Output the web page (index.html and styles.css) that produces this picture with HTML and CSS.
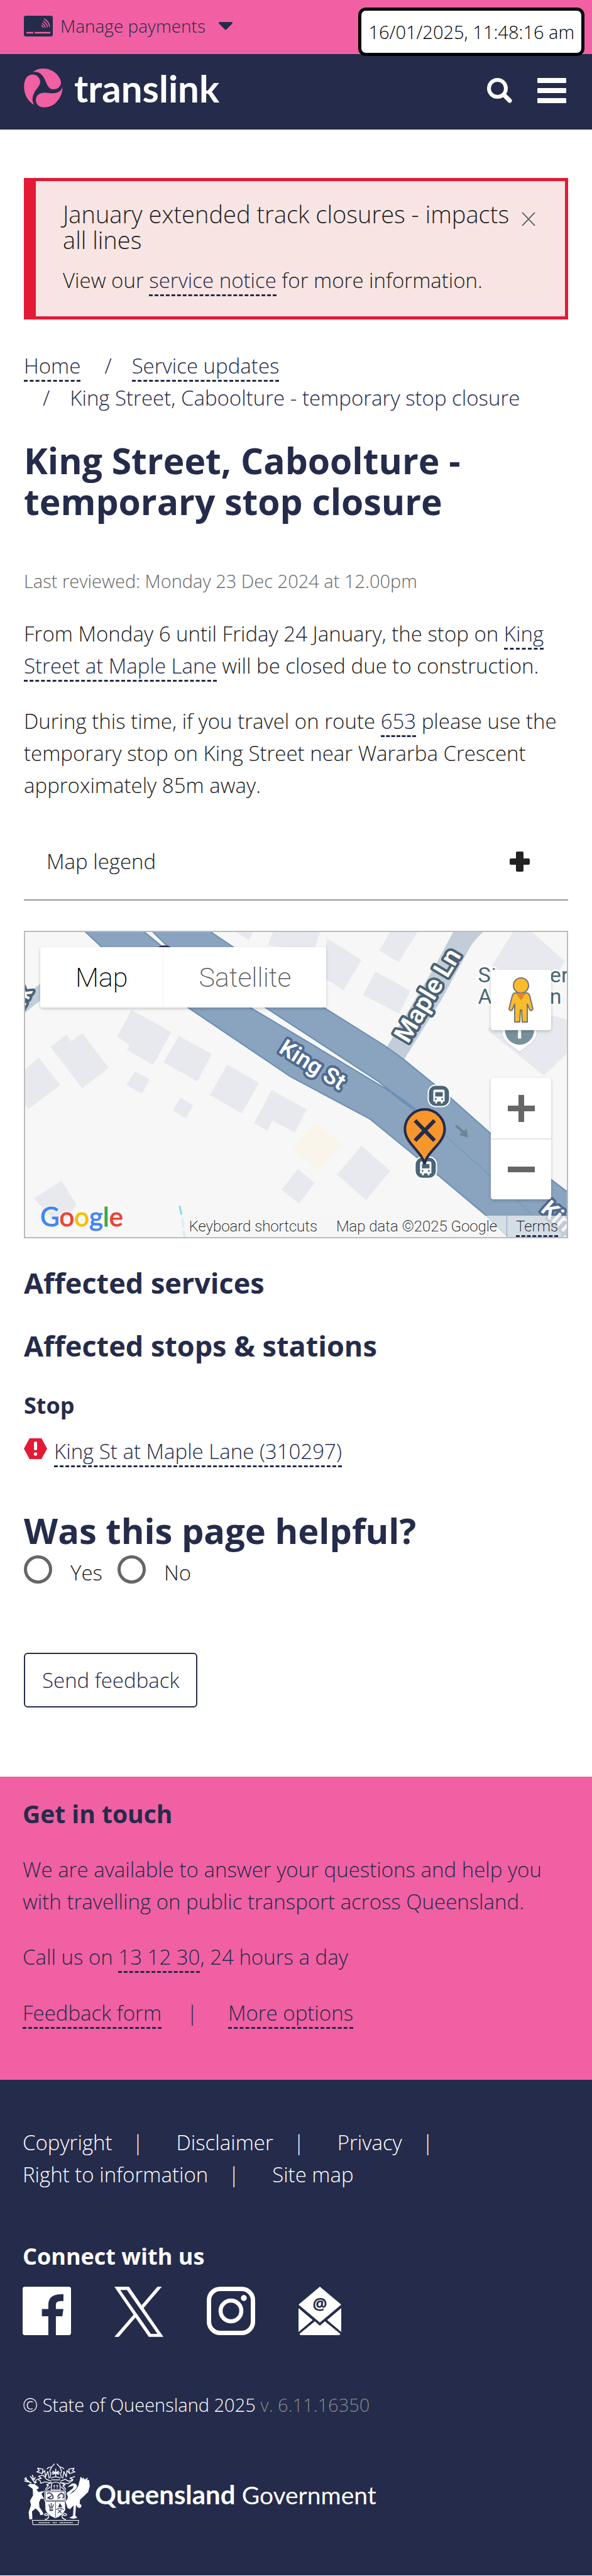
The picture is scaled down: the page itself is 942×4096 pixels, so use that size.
FILE: index.html
```html
<!DOCTYPE html>
<html lang="en">
<head>
<meta charset="utf-8">
<meta name="viewport" content="width=device-width, initial-scale=1">
<title>King Street, Caboolture - temporary stop closure | Translink</title>
<link rel="stylesheet" href="styles.css">
</head>
<body>
<header>
  <div class="topbar">
    <button class="payments" type="button">
      <svg width="46" height="33" viewBox="0 0 46 33" aria-hidden="true">
        <rect width="46" height="33" rx="3" fill="#252b4b"/>
        <g fill="none" stroke="#f060a2" stroke-width="1.6">
          <path d="M32 5Q40 9 41 18"/><path d="M31 9Q37 12 37.5 18.500"/><path d="M29 12Q33 14 34 19"/><path d="M28 15Q30 16 31 19"/>
          <path d="M4 27H15M17 27H42" stroke-width="2.500"/>
        </g>
      </svg>
      <span>Manage payments</span>
      <svg class="caret" width="22" height="13" viewBox="0 0 22 13" aria-hidden="true"><path d="M1 0H21Q23 1 21 3L12 12Q11 13 10 12L1 3Q-1 1 1 0Z" fill="#252b4b"/></svg>
    </button>
    <time class="stamp" datetime="2025-01-16T11:48:16">16/01/2025, 11:48:16 am</time>
  </div>
  <nav class="navbar" aria-label="Main">
    <a class="brand" href="#">
      <svg width="62" height="62" viewBox="36 20 232 234" aria-hidden="true">
        <g fill="#f060a2">
          <path d="M90 40C120 15 170 15 205 33C240 52 258 85 258 105C258 125 240 145 212 145C185 145 175 120 163 90C150 60 130 35 90 40Z"/>
          <path d="M98 238C60 220 36 175 36 130C36 85 55 56 88 56C115 56 133 78 133 100C133 125 108 140 95 170C83 195 85 220 98 238Z"/>
          <path d="M267 131C268 180 240 215 215 235C190 252 160 254 145 252C120 248 107 230 107 208C107 185 125 165 155 165C190 163 245 185 267 131Z"/>
        </g>
      </svg>
      <span>translink</span>
    </a>
    <div class="tools">
      <button type="button" aria-label="Search">
        <svg width="40" height="40" viewBox="0 0 40 40"><g fill="none" stroke="#fff"><circle cx="16.5" cy="16.5" r="13.500" stroke-width="6"/><path d="M26.500 26.500L36 36" stroke-width="7" stroke-linecap="round"/></g></svg>
      </button>
      <button type="button" aria-label="Menu">
        <svg width="46" height="40" viewBox="0 0 46 40"><g fill="#fff"><rect width="46" height="8" rx="1"/><rect y="16" width="46" height="8" rx="1"/><rect y="32" width="46" height="8" rx="1"/></g></svg>
      </button>
    </div>
  </nav>
</header>

<main>
  <section class="alert" role="alert">
    <div class="alert-body">
      <h2>January extended track closures - impacts all lines</h2>
      <p>View our <a href="#">service notice</a> for more information.</p>
    </div>
    <button class="close" type="button" aria-label="Close">
      <svg width="24" height="26" viewBox="0 0 24 26"><path d="M2 4L22 25M22 4L2 25" stroke="#fff" stroke-width="2"/><path d="M2 2L22 23M22 2L2 23" stroke="#666" stroke-width="2"/></svg>
    </button>
  </section>

  <ol class="crumbs" aria-label="Breadcrumb">
    <li><a href="#">Home</a></li>
    <li><a href="#">Service updates</a></li>
    <li>King Street, Caboolture - temporary stop closure</li>
  </ol>

  <h1>King Street, Caboolture - temporary stop closure</h1>
  <p class="reviewed">Last reviewed: Monday 23 Dec 2024 at 12.00pm</p>
  <p class="para">From Monday 6 until Friday 24 January, the stop on <a href="#">King Street at Maple Lane</a> will be closed due to construction.</p>
  <p class="para">During this time, if you travel on route <a href="#">653</a> please use the temporary stop on King Street near Wararba Crescent approximately 85m away.</p>

  <button class="legend" type="button" aria-expanded="false">
    <span>Map legend</span>
    <svg width="32" height="32" viewBox="0 0 32 32" aria-hidden="true"><path d="M12 0H20Q22 0 22 2V11H30Q32 11 32 13V19Q32 21 30 21H22V30Q22 32 20 32H12Q10 32 10 30V21H2Q0 21 0 19V13Q0 11 2 11H10V2Q10 0 12 0Z" fill="#222"/></svg>
  </button>

  <section class="map" aria-label="Map">
    <svg class="map-art" viewBox="2 2 862 484" preserveAspectRatio="xMidYMid slice">
      <rect width="866" height="488" fill="#f7f7f7"/>
      <g transform="scale(.6008 .3363) translate(-64 -57)">
        <g fill="#e8e9ee">
          <path d="M350 430L455 535L407 690L338 620L345 598L312 556Z"/>
          <path d="M475 553L562 638L524 767L435 678Z"/>
          <path d="M220 541L290 704L220 800L136 606L178 547L190 578Z"/>
          <path d="M105 655L162 785L78 897L64 870V720Z"/>
          <path d="M358 720L398 758L378 826L337 785Z"/>
          <path d="M603 688L687 775L641 918L557 832Z"/>
          <path d="M479 844L513 880L494 942L459 905Z"/>
          <path d="M720 808L813 900L782 1008L722 953L709 1000L674 966Z"/>
          <path d="M958 1072L1034 1190L970 1327L893 1207Z"/>
          <path d="M790 1180L834 1247L793 1344L746 1278Z"/>
          <path d="M165 1236L205 1350L160 1450L92 1320Z"/>
          <path d="M995 250L1087 340L1057 448L962 360Z"/>
          <path d="M867 93L958 195L910 336L850 270Z"/>
          <path d="M725 57H850L832 150L710 125Z"/>
          <path d="M1035 57H1108L1056 205L1005 150Z"/>
          <path d="M620 57H673L660 100Z"/>
          <path d="M1360 57H1405L1495 200L1450 340L1300 230Z"/>
          <path d="M1350 400L1510 480V620L1440 740L1290 525Z"/>
        </g>
        <path d="M835 960L905 1060L848 1192L777 1090Z" fill="#f9f5ea"/>
        <path d="M64 370L120 290V370L64 450Z" fill="#c2cdd9"/>
        <path d="M1202 57H1283Q1250 110 1240 150L1170 380L1070 665L1020 620L1150 230Z" fill="#c2cdd9"/>
        <path d="M225 57L290 165L500 420L770 745L980 945L1100 1120L1290 1405L1350 1510H1510V1300L1300 1015L1190 840L1070 665L1020 600L850 410L620 135L555 57Z" fill="#8aa3bf" stroke="#6b8fb4" stroke-width="2" vector-effect="non-scaling-stroke"/>
        <path d="M380 57H403L445 130L705 420L1000 765L1040 822L955 730L665 420L430 130Z" fill="#f7f7f7" stroke="#6b8fb4" stroke-width="2" vector-effect="non-scaling-stroke"/>
        <path d="M1038 820Q1110 890 1190 1040L1370 1330L1470 1510" fill="none" stroke="#6b8fb4" vector-effect="non-scaling-stroke"/>
        <path d="M1038 820L1100 905" stroke="#6b8fb4" stroke-width="4" vector-effect="non-scaling-stroke"/>
        <ellipse cx="437" cy="148" rx="22" ry="22" fill="#252b4b"/>
        <path d="M477 1355Q488 1440 490 1510" fill="none" stroke="#8fd8e8" stroke-width="3" stroke-dasharray="14 6" vector-effect="non-scaling-stroke"/>
      </g>
      <g class="road-name" stroke="#4f6a92">
        <text x="0" y="0" font-size="36" transform="translate(404 192) rotate(32)">King St</text>
        <text x="0" y="0" font-size="36" transform="translate(820 444) rotate(42)">King St</text>
      </g>
      <g class="road-name" stroke="#4b6274">
        <text x="0" y="0" font-size="40" transform="translate(611 180) rotate(-59)">Maple Ln</text>
        <text x="0" y="0" font-size="32" transform="translate(-6 136) rotate(-62)">ark</text>
      </g>
      <g class="poi-name"><text x="722" y="82">St</text><text x="836" y="82">er</text><text x="722" y="116">A</text><text x="836" y="116">n C</text></g>
      <path d="M760 160A28 28 0 0 1 816 160C816 178 796 184 788 193C780 184 760 178 760 160Z" fill="#fff" stroke="#ccd3dc"/>
      <circle cx="788" cy="158" r="23" fill="#78909c"/><path d="M788 150V171" stroke="#fff" stroke-width="5"/>
      <g stroke="#fff" stroke-width="2"><rect x="643" y="245" width="34" height="34" rx="12" fill="#4a6578"/><rect x="622" y="359" width="34" height="34" rx="12" fill="#4a6578"/></g>
      <g fill="#fff">
        <path d="M654 252H666Q669 252 669 255V271H666V274H663V271H657V274H654V271H651V255Q651 252 654 252Z"/>
        <path d="M633 366H645Q648 366 648 369V385H645V388H642V385H636V388H633V385H630V369Q630 366 633 366Z"/>
      </g>
      <g fill="#4a6578"><rect x="654" y="256" width="12" height="7"/><rect x="633" y="370" width="12" height="7"/><circle cx="655" cy="267" r="1.500"/><circle cx="665" cy="267" r="1.500"/><circle cx="634" cy="381" r="1.500"/><circle cx="644" cy="381" r="1.500"/></g>
      <path d="M637 370C633 350 606 337 606 315A31.500 31.500 0 0 1 669 315C669 337 641 350 637 370Z" fill="#f7962a" stroke="#252b4b" stroke-width="4"/>
      <path d="M622 301L653 333M653 301L622 333" stroke="#252b4b" stroke-width="6"/>
      <path d="M687 309L699 320" stroke="#6c8396" stroke-width="4"/><path d="M706 328L692 324L704 314Z" fill="#6c8396"/>
    </svg>

    <div class="map-types"><button type="button">Map</button><button type="button" class="off">Satellite</button></div>
    <div class="map-controls">
      <button class="pegman" type="button" aria-label="Street View">
        <svg width="40" height="72" viewBox="0 0 40 72"><g fill="#fbbc2c" stroke="#757575" stroke-width="2"><path d="M10 25H30Q33 26 34 30L39 50Q38 54 34 52L30 42V71H22L21 52H19L18 71H10V42L6 52Q2 54 1 50L6 30Q7 26 10 25Z"/><circle cx="20" cy="13" r="12"/></g><path d="M12 25H28L20 37Z" fill="#e0852f"/></svg>
      </button>
      <div class="zoom">
        <button type="button" aria-label="Zoom in"><svg width="43" height="43" viewBox="0 0 43 43"><path d="M17 0H26V17H43V26H26V43H17V26H0V17H17Z" fill="#666"/></svg></button>
        <button type="button" aria-label="Zoom out"><svg width="43" height="43" viewBox="0 0 43 43"><path d="M0 17H43V26H0Z" fill="#666"/></svg></button>
      </div>
    </div>
    <a class="google" href="#"><span class="b">G</span><span class="r">o</span><span class="y">o</span><span class="b">g</span><span class="g">l</span><span class="r">e</span></a>
    <div class="map-credits">
      <button type="button">Keyboard shortcuts</button><span>Map data ©2025 Google</span><span class="terms"><a href="#">Terms</a></span>
    </div>
  </section>

  <h2 class="section-title">Affected services</h2>
  <h2 class="section-title">Affected stops &amp; stations</h2>
  <h3>Stop</h3>
  <div class="stop">
    <svg width="37" height="33" viewBox="0 0 37 33" aria-hidden="true"><path d="M9 0H28L37 16.500L28 33H9L0 16.500Z" fill="#e41936"/><path d="M18.500 7.500V16.500" stroke="#fff" stroke-width="5" stroke-linecap="round"/><circle cx="18.500" cy="25" r="2.700" fill="#fff"/></svg>
    <p><a href="#">King St at Maple Lane (310297)</a></p>
  </div>

  <form class="helpful">
    <fieldset>
      <legend>Was this page helpful?</legend>
      <div class="choices">
        <input type="radio" name="helpful" id="yes"><label for="yes">Yes</label>
        <input type="radio" name="helpful" id="no"><label for="no">No</label>
      </div>
    </fieldset>
    <button class="send" type="button">Send feedback</button>
  </form>
</main>

<section class="contact">
  <h2>Get in touch</h2>
  <p>We are available to answer your questions and help you with travelling on public transport across Queensland.</p>
  <p>Call us on <a href="#">13 12 30</a>, 24 hours a day</p>
  <ul>
    <li><a href="#">Feedback form</a></li>
    <li><a href="#">More options</a></li>
  </ul>
</section>

<footer>
  <ul class="legal">
    <li><a href="#">Copyright</a></li>
    <li><a href="#">Disclaimer</a></li>
    <li><a href="#">Privacy</a></li>
    <li><a href="#">Right to information</a></li>
    <li><a href="#">Site map</a></li>
  </ul>
  <h2>Connect with us</h2>
  <div class="social">
    <a href="#" aria-label="Facebook"><svg width="77" height="77" viewBox="60 1056 128 288" preserveAspectRatio="none"><path fill="#fff" d="M66 1056H182Q188 1056 188 1070V1330Q188 1344 182 1344H148V1232H165L168 1189H148V1165C148 1145 153 1141 168 1141V1101C140 1098 128 1120 128 1165V1189H111V1232H128V1344H66Q60 1344 60 1330V1070Q60 1056 66 1056Z"/></svg></a>
    <a href="#" aria-label="X"><svg width="78" height="80" viewBox="0 0 1200 1227"><path fill="#fff" d="M714.163 519.284L1160.890 0H1055.030L667.137 450.887L357.328 0H0L468.492 681.821L0 1226.370H105.866L515.491 750.218L842.672 1226.370H1200L714.137 519.284ZM569.165 687.828L521.697 619.934L144.011 79.694H306.615L611.412 515.685L658.880 583.579L1055.080 1150.300H892.476L569.165 687.854Z"/></svg></a>
    <a href="#" aria-label="Instagram"><svg width="77" height="77" viewBox="0 0 77 77"><g fill="none" stroke="#fff"><rect x="3.500" y="3.500" width="70" height="70" rx="18" stroke-width="7"/><circle cx="38.500" cy="38.500" r="16.500" stroke-width="6.500"/></g><circle cx="59" cy="18" r="4.700" fill="#fff"/></svg></a>
    <a href="#" aria-label="Email"><svg width="68" height="77" viewBox="0 0 68 77"><path fill="#fff" d="M34 0L68 28.500L34 57L0 28.500ZM0 34L22.500 53L0 72ZM68 34L45.500 53L68 72ZM26 55L34 62L42 55L66.500 75L65 77H3L1.500 75Z"/><text class="at" x="34" y="37" text-anchor="middle">@</text></svg></a>
  </div>
  <p class="copy">© State of Queensland 2025 <span>v. 6.11.16350</span></p>
  <a class="gov" href="#">
    <svg width="105" height="98" viewBox="26 40 392 367" aria-hidden="true">
      <g fill="none" stroke="#fff" stroke-width="5" stroke-linejoin="round">
        <path d="M208 42L190 62L180 85L186 105L180 125M222 42L240 62L250 85L244 105L250 125"/>
        <path d="M190 62L172 64L162 74M240 62L254 64L264 74"/>
        <path d="M106 68L140 74L134 100L150 82L154 120L168 88L176 130M106 68L118 84L102 90L134 100M106 134L130 128L112 116L140 110L160 134L188 146M106 134L122 142L126 158L150 150L186 156"/>
        <path d="M326 68L292 74L298 100L282 82L278 120L264 88L256 130M326 68L314 84L330 90L298 100M330 118L300 128L318 136L292 146L272 134L244 146M318 140L290 160L250 156"/>
        <path d="M152 196L172 172L160 168L192 152M276 196L258 172L272 168L240 152M160 198L184 178M268 198L246 178"/>
        <path d="M28 130L46 142L70 158M36 122L44 142M28 144L52 150M64 116L76 134L92 158M76 108L82 134M94 122L84 140M102 134L92 152M102 152L90 158" stroke-width="6"/>
        <path d="M150 376Q180 366 172 348Q160 330 148 344Q150 356 172 346M276 376Q246 366 254 348Q266 330 280 344Q278 356 254 346"/>
        <path d="M75 379H352L348 405H80Z" stroke-width="4"/>
        <path d="M114 393H180M198 393H220M238 393H316" stroke-width="8" stroke-dasharray="5 4"/>
        <path d="M186 128Q215 112 244 128M188 138H242M190 160L188 198H242L240 160Q215 142 190 160Z"/>
        <path d="M206 166V192M224 166V192M199 174H213M217 174H231" stroke-width="3"/>
        <path d="M196 86L234 106M234 86L196 106M215 72V118M190 96H240" stroke-width="6"/>
      </g>
      <g fill="#fff">
        <path d="M48 170L62 162L90 164L114 182L112 192L100 194L112 210L148 204L130 222L146 252L126 250L116 272L118 300L138 330L142 344L124 348L118 330L96 308L74 326L76 372L58 372L54 330L68 288L62 262L80 230L78 192Z"/>
        <path d="M284 182L312 160Q338 154 342 176Q344 190 316 206L300 224Q340 200 350 172L364 118L374 132L380 122L386 136L406 124L402 140L414 138L418 176L408 210L380 238L360 256L358 280L370 290L362 306L346 302L336 286L332 350L344 364L320 370L296 364L318 352L322 290L300 312L286 306L274 270L288 242L280 216L318 188L322 172Z"/>
        <path d="M148 202H276V266H270L272 316Q256 350 214 366Q168 350 154 316L152 266H148Z"/>
      </g>
      <g fill="none" stroke="#252b4b" stroke-width="3">
        <path d="M154 208H270V260H154ZM214 266V360M158 266H268"/>
        <path d="M164 222Q176 210 190 222Q206 240 196 248Q176 256 168 240M226 240Q240 212 258 222Q270 236 256 248M226 250L244 240M166 248L190 232" stroke-width="6"/>
        <path d="M174 284L182 306M188 276V306M202 284L194 306M176 312H200M178 320H198" stroke-width="5"/>
        <path d="M228 314L250 336M250 314L228 336M218 316Q238 296 264 316" stroke-width="4"/>
      </g>
      <path d="M230 300L240 276L254 300Z" fill="#252b4b"/>
    </svg>
    <span class="gov-name"><strong>Queensland</strong> <span>Government</span></span>
  </a>
</footer>
</body>
</html>
```
FILE: styles.css
```css
:root {
  --navy: #252b4b;
  --pink: #f060a2;
}
* { box-sizing: border-box; margin: 0; padding: 0; }
body {
  background: #fff;
  color: #222;
  font: 300 33px/51px "Open Sans", "Noto Sans", sans-serif;
}
button { font: inherit; color: inherit; background: none; border: 0; cursor: pointer; }
svg { display: block; flex: none; }
ul, ol { list-style: none; }
a { color: var(--navy); text-decoration: none; border-bottom: 3px dashed var(--navy); }
h1, h2, h3, legend { color: var(--navy); font-weight: 700; }

/* Header */
.topbar {
  position: relative;
  display: flex;
  align-items: center;
  min-height: 86px;
  padding: 0 38px 4px;
  background: var(--pink);
}
.payments {
  display: flex;
  align-items: center;
  gap: 12px;
  color: var(--navy);
  font-size: 28px;
}
.caret { margin-left: 9px; }
.stamp {
  position: absolute;
  top: 12px;
  right: 12px;
  z-index: 1;
  padding: 12px 11px;
  border: 5px solid #000;
  border-radius: 12px;
  background: #fff;
  color: #000;
  font-size: 29px;
  line-height: 43px;
}
.navbar {
  display: flex;
  align-items: center;
  justify-content: space-between;
  min-height: 120px;
  padding: 0 41px 12px 38px;
  background: var(--navy);
}
.brand {
  display: flex;
  align-items: center;
  gap: 18px;
  border: 0;
  color: #fff;
  font: 700 60px/72px Lato, sans-serif;
}
.tools { display: flex; align-items: center; gap: 40px; padding-top: 8px; }

/* Main column */
main { padding: 77px 38px 110px; }
.alert {
  display: flex;
  justify-content: space-between;
  padding: 32px 46px 32px 43px;
  border: 5px solid #e41936;
  border-left-width: 19px;
  background: #f8e5e3;
}
.alert-body { flex: 1; }
.alert h2 { margin-bottom: 18px; color: #222; font-weight: 300; font-size: 38px; line-height: 41px; }
.close { align-self: flex-start; padding-top: 16px; }
.crumbs { display: flex; flex-wrap: wrap; column-gap: 8px; margin-top: 48px; color: var(--navy); }
.crumbs li + li { padding-left: 30px; }
.crumbs li + li::before { content: "/"; margin-right: 32px; }
h1 { margin-top: 42px; font-size: 57px; line-height: 65px; }
.reviewed { margin-top: 72px; color: #666; font-size: 29px; line-height: 43px; }
.para { margin-top: 37px; }
.legend {
  display: flex;
  align-items: center;
  justify-content: space-between;
  width: 100%;
  margin-top: 34px;
  padding: 36px 61px 35px 36px;
  border-bottom: 2px solid #979797;
}

/* Map */
.map {
  position: relative;
  height: 489px;
  margin-top: 48px;
  overflow: hidden;
  border: 2px solid #bbb;
}
.map-art { width: 100%; height: 100%; }
.road-name { fill: #fff; stroke-width: 8px; stroke-linejoin: round; paint-order: stroke; font-family: Roboto, sans-serif; font-weight: 600; }
.poi-name { fill: #4d6773; stroke: #fff; stroke-width: 5px; paint-order: stroke; font: 400 34px Roboto, sans-serif; }
.map-types {
  position: absolute;
  top: 24px;
  left: 24px;
  display: flex;
  gap: 1px;
  border-radius: 4px;
  background: #eee;
  box-shadow: 0 2px 5px rgba(0, 0, 0, .2);
  overflow: hidden;
}
.map-types button { padding: 22px 56px; background: #fff; color: #000; font: 200 43px/52px Roboto, sans-serif; }
.map-types .off { color: #565656; }
.map-controls { position: absolute; top: 60px; right: 25px; display: grid; gap: 76px; width: 96px; }
.map-controls button { display: flex; align-items: center; justify-content: center; width: 100%; height: 96px; }
.pegman, .zoom { background: #fff; border-radius: 4px; box-shadow: 0 2px 5px rgba(0, 0, 0, .2); }
.zoom { padding-bottom: 1px; }
.zoom button + button { border-top: 2px solid #e6e6e6; }
.google {
  position: absolute;
  left: 24px;
  bottom: 9px;
  border: 0;
  font: 400 42px/48px Lato, sans-serif;
  -webkit-text-stroke: 1px currentColor;
  text-shadow: 0 0 4px #fff, 0 0 4px #fff;
}
.google .b { color: #4285f4; }
.google .r { color: #ea4335; }
.google .y { color: #fbbc05; }
.google .g { color: #34a853; }
.map-credits {
  position: absolute;
  right: 0;
  bottom: 0;
  display: flex;
  color: #000;
  font: 200 24px/34px Roboto, sans-serif;
}
.map-credits > * { padding: 0 15px; background: rgba(245, 245, 245, .7); }
.map-credits button { font: inherit; }
.map-credits .terms { margin-left: 1px; padding: 0 14px; }
.map-credits a { display: block; height: 34px; color: #000; }

/* Affected stops */
.section-title { margin-top: 42px; font-size: 45px; line-height: 58px; }
h3 { margin-top: 43px; font-size: 36px; line-height: 46px; }
.stop { display: flex; gap: 11px; margin-top: 24px; }
.stop svg { margin-top: 5px; }

/* Feedback form */
.helpful { margin-top: 68px; }
fieldset { border: 0; }
legend { font-size: 56px; line-height: 65px; }
.choices { display: flex; align-items: flex-end; height: 53px; margin-top: 7px; }
.choices input {
  appearance: none;
  align-self: flex-start;
  width: 45px;
  height: 45px;
  border: 5px solid #666;
  border-radius: 50%;
}
.choices label { margin: 0 24px 0 29px; }
.send {
  margin-top: 102px;
  padding: 16px 27px;
  border: 2px solid var(--navy);
  border-radius: 6px;
  color: var(--navy);
}

/* Contact band */
.contact { padding: 30px 36px 81px; background: var(--pink); color: var(--navy); }
.contact h2 { font-size: 39px; line-height: 58px; }
.contact p { margin-top: 34px; }
.contact p + p { margin-top: 37px; }
.contact ul { display: flex; margin-top: 38px; }
.contact li + li::before { content: "|"; margin: 0 48px 0 40px; }

/* Footer */
footer { padding: 74px 36px 80px; background: var(--navy); color: #fff; }
footer a { border: 0; color: #fff; }
footer h2 { margin-top: 82px; color: #fff; font-size: 36px; line-height: 46px; }
.legal { display: flex; flex-wrap: wrap; }
.legal li:not(:last-child)::after { content: "|"; margin: 0 52px 0 32px; }
.social { display: flex; gap: 69px; height: 77px; margin-top: 25px; }
.at { fill: var(--navy); font: 700 26px "Open Sans", sans-serif; }
.copy { margin-top: 89px; font-size: 29px; line-height: 43px; }
.copy span { color: #888; }
.gov { display: flex; align-items: center; gap: 8px; margin-top: 72px; padding-left: 2px; font: 400 39px/52px Lato, sans-serif; }
.gov strong { font-size: 42px; font-weight: 700; }
```
